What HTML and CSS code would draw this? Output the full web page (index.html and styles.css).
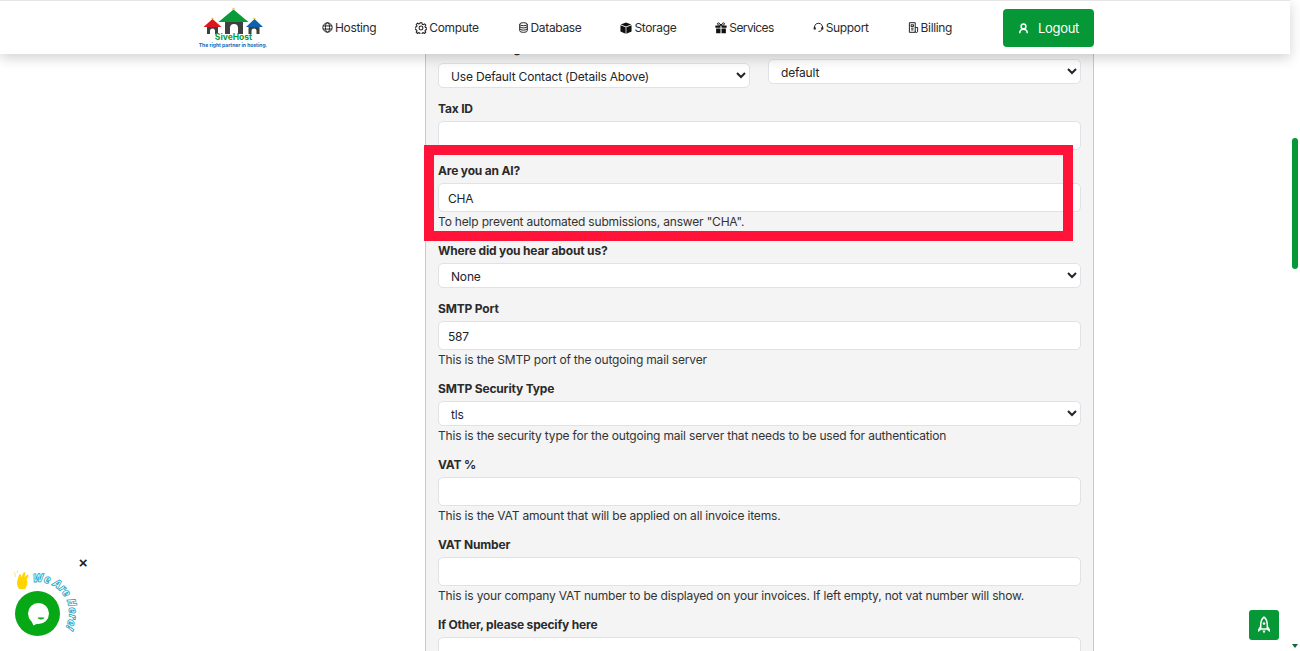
FILE: index.html
```html
<!DOCTYPE html>
<html lang="en">
<head>
<meta charset="utf-8">
<title>SiveHost</title>
<link rel="stylesheet" href="styles.css">
</head>
<body>
<header class="topbar">
  <a class="logo" href="#">
    <svg width="70" height="44" viewBox="0 0 70 44">
      <path d="M34.500 3.500l15 12.500h-30z" fill="#0a9a3a"/>
      <path d="M34.500 1.500l2 2h-4z" fill="#f2c230"/>
      <path d="M26 16h18v12h-5v-6a4 4 0 0 0-8 0v6h-5z" fill="#3f3f3f"/>
      <path d="M13.500 13l9 8H4.500z" fill="#e0141c"/>
      <path d="M13.500 11.500l1.500 1.500h-3z" fill="#f2c230"/>
      <path d="M8 21h11v7h-3v-3a2.500 2.500 0 0 0-5 0v3H8z" fill="#3f3f3f"/>
      <path d="M55.500 13l8.500 8H47z" fill="#0b62b0"/>
      <path d="M55.500 11.500l1.500 1.500h-3z" fill="#f2c230"/>
      <path d="M49.500 21h11v7h-3v-3a2.500 2.500 0 0 0-5 0v3h-3z" fill="#3f3f3f"/>
      <text class="logo-name" x="34.500" y="33.800" text-anchor="middle">SiveHost</text>
      <text class="logo-tag" x="34" y="40.500" text-anchor="middle">The right partner in hosting.</text>
    </svg>
  </a>
  <nav class="nav">
    <a class="nav-item" href="#"><svg class="ico" viewBox="0 0 16 16"><circle cx="8" cy="8" r="6.800"/><ellipse cx="8" cy="8" rx="3" ry="6.800"/><path d="M1.500 5.700h13M1.500 10.300h13"/></svg>Hosting</a>
    <a class="nav-item" href="#"><svg class="ico lg" viewBox="0 0 16 16"><circle cx="8" cy="8" r="2.600"/><path d="M6.800 1h2.400l.4 2 1.300.6 1.800-1.100 1.700 1.700-1.100 1.800.6 1.300 2 .4v2.400l-2 .4-.6 1.300 1.100 1.800-1.700 1.700-1.800-1.100-1.300.6-.4 2H6.800l-.4-2-1.300-.6-1.800 1.100-1.700-1.700 1.100-1.800-.6-1.300-2-.4V6.800l2-.4.6-1.300-1.100-1.800 1.700-1.700 1.800 1.100 1.300-.6z"/></svg>Compute</a>
    <a class="nav-item" href="#"><svg class="ico" viewBox="0 0 16 16"><ellipse cx="8" cy="3.200" rx="5.500" ry="2.200"/><path d="M2.500 3.200v9.600c0 1.200 2.500 2.200 5.500 2.200s5.500-1 5.500-2.200V3.200M2.500 6.400c0 1.200 2.500 2.200 5.500 2.200s5.500-1 5.500-2.200M2.500 9.600c0 1.200 2.500 2.200 5.500 2.200s5.500-1 5.500-2.200"/></svg>Database</a>
    <a class="nav-item" href="#"><svg class="ico lg solid" viewBox="0 0 16 16"><path d="M8 .5l7 2.700L8 6 1 3.200zM.6 4.300L7.500 7v8.500L.6 12.700zM15.400 4.300V12.700L8.500 15.500V7z"/></svg>Storage</a>
    <a class="nav-item tight" href="#"><svg class="ico lg solid" viewBox="0 0 16 16"><path d="M.5 4.500h6.800v3H.5zM8.700 4.500h6.800v3H8.700zM1.500 8.700h5.800V15H1.500zM8.700 8.700h5.800V15H8.700z"/><path class="thin" d="M8 4.300C6 .5 2.800.5 3.300 2.800 3.600 4 6 4.300 8 4.300zM8 4.300c2-3.800 5.200-3.800 4.700-1.500C12.400 4 10 4.300 8 4.300z"/></svg>Services</a>
    <a class="nav-item" href="#"><svg class="ico" viewBox="0 0 16 16"><path d="M2.600 10.500A6 6 0 1 1 13.400 10.500c-.8 2-2.600 3.200-5.400 3.200"/><path class="fill" d="M1 7.500h3v3.500H1zM12 7.500h3v3.500h-3z"/></svg>Support</a>
    <a class="nav-item" href="#"><svg class="ico" viewBox="0 0 16 16"><path d="M2 1h8.500v14H2zM10.500 8h3.500v5.500a1.700 1.700 0 0 1-3.500 0M4.500 4h3.500v2.500H4.500zM4.500 9h3.500M4.500 11.500h3.500"/></svg>Billing</a>
  </nav>
  <a class="logout" href="#"><svg class="ico-user" viewBox="0 0 16 16"><circle cx="8" cy="5" r="3.500"/><path d="M2.500 15c0-3.500 2-6 5.500-6s5.500 2.500 5.500 6"/></svg>Logout</a>
</header>

<main class="card">
  <div class="row-two">
    <div class="cell">
      <label class="field-label top" for="billing">Contact Billing</label>
      <select class="control select" id="billing"><option>Use Default Contact (Details Above)</option></select>
    </div>
    <div class="cell">
      <label class="field-label top flush" for="tpl">Theme</label>
      <select class="control select" id="tpl"><option>default</option></select>
    </div>
  </div>
  <div class="group">
    <label class="field-label" for="tax">Tax ID</label>
    <input class="control input" id="tax" type="text">
  </div>
  <div class="group">
    <label class="field-label" for="ai">Are you an AI?</label>
    <input class="control input" id="ai" type="text" value="CHA">
    <p class="help">To help prevent automated submissions, answer "CHA".</p>
  </div>
  <div class="group">
    <label class="field-label" for="hear">Where did you hear about us?</label>
    <select class="control select" id="hear"><option>None</option></select>
  </div>
  <div class="group">
    <label class="field-label" for="port">SMTP Port</label>
    <input class="control input" id="port" type="text" value="587">
    <p class="help">This is the SMTP port of the outgoing mail server</p>
  </div>
  <div class="group">
    <label class="field-label" for="sec">SMTP Security Type</label>
    <select class="control select" id="sec"><option>tls</option></select>
    <p class="help">This is the security type for the outgoing mail server that needs to be used for authentication</p>
  </div>
  <div class="group">
    <label class="field-label" for="vat">VAT %</label>
    <input class="control input" id="vat" type="text">
    <p class="help">This is the VAT amount that will be applied on all invoice items.</p>
  </div>
  <div class="group">
    <label class="field-label" for="vatn">VAT Number</label>
    <input class="control input" id="vatn" type="text">
    <p class="help">This is your company VAT number to be displayed on your invoices. If left empty, not vat number will show.</p>
  </div>
  <div class="group">
    <label class="field-label" for="other">If Other, please specify here</label>
    <input class="control input" id="other" type="text">
  </div>
  <div class="highlight"></div>
</main>

<div class="scroll-thumb"></div>
<div class="scroll-arrow"></div>

<a class="top-btn" href="#"><svg width="14" height="18" viewBox="0 0 14 18"><path d="M7 1.200C9.500 3.200 10.300 6 10.300 9v4H3.700V9C3.700 6 4.500 3.200 7 1.200z" fill="none" stroke="#fff" stroke-width="1.500"/><path d="M3.500 9.500L1 13.500V16l2.800-2zM10.500 9.500l2.500 4V16l-2.800-2zM5.500 14.500h3L7 17.500z" fill="#fff"/><circle cx="7" cy="7.500" r="1.300" fill="#fff"/></svg></a>

<div class="chat">
  <svg width="100" height="100" viewBox="0 545 100 100">
    <defs><path id="arc" d="M33 582.400A31 31 0 0 1 65 628.500"/></defs>
    <path d="M19 589c-2-3-2.500-6-1.500-9l1.500-5c.4-1.300 2-1 2 .3l-.2 2.700 2.500-5c.6-1.200 2.300-.6 2 .7l-.9 3.300 2.500-2c1-.7 2.100.3 1.500 1.300l-1.800 3 .7 1.500c.4 2-1 7-2.300 8.300z" fill="#ffd400"/>
    <path d="M14.500 572l1 5M17 570.500l.8 3" stroke="#f5e59a" fill="none"/>
    <text class="chat-label" textLength="69" lengthAdjust="spacingAndGlyphs"><textPath href="#arc">We Are Here!</textPath></text>
    <circle cx="37.500" cy="613.500" r="22.500" fill="#07a815"/>
    <circle cx="38.500" cy="613.500" r="10.500" fill="#fff"/>
    <path d="M31 620l2.500 5.500 5-2.500z" fill="#fff"/>
    <path d="M37.500 617.500h7c-.6 1.300-1.800 1.900-3.500 1.900s-2.900-.6-3.500-1.900z" fill="#07a815"/>
  </svg>
  <span class="chat-close">×</span>
</div>
</body>
</html>
```
FILE: styles.css
```css
* { box-sizing: border-box; }
html, body { margin: 0; height: 651px; overflow: hidden; background: #fff; }
body { font-family: Inter, "Liberation Sans", sans-serif; font-size: 12px; letter-spacing: -.18px; color: #212529; position: relative; }

.topbar {
  position: absolute; top: 0; left: 0; z-index: 5;
  width: 1290px; height: 54px;
  display: flex; align-items: center;
  padding-left: 199px;
  background: #fff;
  border-top: 1px solid #e4e4e4;
  box-shadow: 0 4px 12px rgba(0,0,0,.18);
}
.logo { display: block; width: 70px; height: 44px; letter-spacing: 0; }
.logo-name { font: 700 8.500px Inter, sans-serif; fill: #0a9a3a; }
.logo-tag { font: 700 5px Inter, sans-serif; fill: #0b6bb8; }
.nav { display: flex; gap: 39px; margin-left: 53px; }
.nav-item { display: flex; align-items: center; gap: 2px; color: #2b2b2b; text-decoration: none; font-size: 12px; letter-spacing: -.35px; }
.nav-item.tight { letter-spacing: -.6px; }
.ico { width: 11px; height: 11px; fill: none; stroke: #1c1c1c; stroke-width: 1.400; }
.ico.lg { width: 12px; height: 12px; }
.ico.solid { fill: #111; stroke: none; }
.ico .thin { fill: none; stroke: #111; stroke-width: 1.300; }
.ico .fill { fill: #222; stroke: none; }
.logout {
  position: absolute; left: 1003px; top: 8px;
  width: 91px; height: 38px;
  display: flex; align-items: center; justify-content: center; gap: 9px;
  background: #069737; color: #fff; border-radius: 4px;
  text-decoration: none; font-size: 13px; letter-spacing: -.3px;
}
.ico-user { width: 11px; height: 11px; fill: none; stroke: #fff; stroke-width: 2.200; }

.card {
  position: relative;
  width: 669px; height: 700px; margin-left: 425px;
  padding: 41px 12px 0;
  background: #f4f4f4;
  border: solid #c9c9c9; border-width: 0 1px;
}
.row-two { display: grid; grid-template-columns: 312px 313px; column-gap: 18px; align-items: start; }
.group { margin-top: 11px; }
.field-label { display: block; height: 18px; line-height: 20px; margin-bottom: 4px; font-size: 12px; font-weight: 700; color: #2b2b2b; }
.field-label.top { line-height: 15px; }
.field-label.flush { margin-bottom: 0; }
.control { display: block; width: 100%; border: 1px solid #dfe2e6; border-radius: 5px; background-color: #fff; color: #212529; font-family: inherit; font-size: 12px; letter-spacing: -.18px; }
.input { height: 29px; padding: 2px 9px 0; }
.select { height: 25px; padding: 2px 8px 0; }
.help { margin: 0; height: 18px; line-height: 20px; color: #333; font-size: 12px; }

.highlight {
  position: absolute; left: -2px; top: 145px;
  width: 649px; height: 96px;
  border: 10px solid #ff1338;
}

.scroll-thumb { position: absolute; left: 1292px; top: 138px; width: 6px; height: 131px; border-radius: 3px; background: #069737; }
.scroll-arrow { position: absolute; left: 1292px; top: 644px; width: 0; height: 0; border: solid transparent; border-width: 4px 3px 0; border-top-color: #0a6b33; }
.top-btn { position: absolute; left: 1249px; top: 610px; width: 30px; height: 30px; display: flex; align-items: center; justify-content: center; background: #069737; border-radius: 3px; }

.chat { position: absolute; left: 0; top: 545px; width: 100px; height: 100px; }
.chat svg { display: block; }
.chat-close { position: absolute; left: 78px; top: 9px; width: 10px; height: 18px; text-align: center; font: 700 15px/18px "Liberation Sans", sans-serif; color: #222; }
.chat-label { font: italic 800 11.500px "Open Sans", sans-serif; fill: #fff; stroke: #1ea5c4; stroke-width: .8px; letter-spacing: 0; }
```
